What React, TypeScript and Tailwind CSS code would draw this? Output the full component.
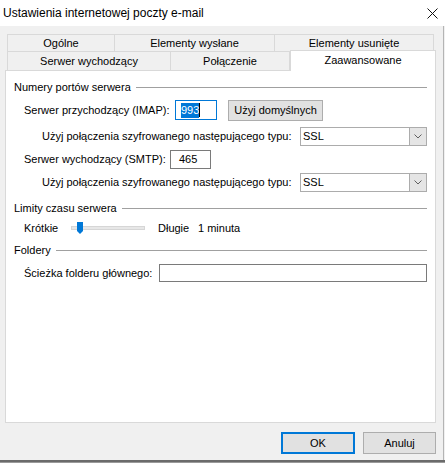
import React from 'react';

const font = { fontFamily: '"Liberation Sans", Arial, sans-serif' };

function GroupHeader({ label, className }: { label: string; className: string }) {
  return (
    <div className={`flex items-center h-[18px] pl-[8px] pr-[8px] ${className}`}>
      <span>{label}</span>
      <div className="flex-1 h-px bg-[#a0a0a0] ml-[5px]" />
    </div>
  );
}

function Combo({ value }: { value: string }) {
  return (
    <div className="ml-auto mr-[8px] w-[127px] h-[19px] shrink-0 border border-[#acacac] bg-white flex items-center">
      <span className="pl-[2px] flex-1">{value}</span>
      <div className="w-[17px] h-[17px] bg-[#e5e5e5] border-l border-[#acacac] flex items-center justify-center">
        <svg width="8" height="5" viewBox="0 0 8 5">
          <path d="M0.5 0.5 L4 4 L7.5 0.5" fill="none" stroke="#606060" strokeWidth="1" />
        </svg>
      </div>
    </div>
  );
}

export default function App() {
  return (
    <div
      className="w-[445px] h-[463px] bg-[#f0f0f0] flex flex-col text-[11px] text-black leading-none overflow-hidden whitespace-nowrap"
      style={font}
    >
      {/* Title bar */}
      <div className="h-[26px] bg-white flex items-center justify-between pl-[3px] pr-[7px] shrink-0">
        <span className="text-[12px]">Ustawienia internetowej poczty e-mail</span>
        <svg width="11" height="11" viewBox="0 0 11 11">
          <path d="M0.5 0.5 L10.5 10.5 M10.5 0.5 L0.5 10.5" stroke="#111" strokeWidth="1" />
        </svg>
      </div>

      <div className="flex-1 flex flex-col border-r border-[#b4b4b4] w-[444px]">
        {/* Tabs */}
        <div className="pl-[5px] pt-[8px]">
          <div className="flex ml-[2px] h-[18px]">
            <div className="w-[108px] border border-[#d9d9d9] flex items-center justify-center">Ogólne</div>
            <div className="w-[160px] border border-l-0 border-[#d9d9d9] flex items-center justify-center">Elementy wysłane</div>
            <div className="w-[159px] border border-l-0 border-[#d9d9d9] flex items-center justify-center">Elementy usunięte</div>
          </div>
          <div className="flex ml-[2px] h-[18px] items-end relative z-10">
            <div className="w-[164px] h-[18px] border border-t-0 border-b-0 border-[#d9d9d9] flex items-center justify-center">Serwer wychodzący</div>
            <div className="w-[119px] h-[18px] border-r border-[#d9d9d9] flex items-center justify-center">Połączenie</div>
            <div className="w-[146px] h-[21px] -mb-px -mt-[3px] bg-white border border-b-0 border-[#d9d9d9] flex items-center justify-center pb-[2px]">
              Zaawansowane
            </div>
          </div>

          {/* Panel */}
          <div className="w-[431px] h-[353px] bg-white border border-[#d9d9d9] flex flex-col">
            <GroupHeader label="Numery portów serwera" className="mt-[7px]" />

            <div className="flex items-start h-[21px] mt-[4px] pl-[18px]">
              <span className="w-[151px] h-[20px] shrink-0 flex items-center">Serwer przychodzący (IMAP):</span>
              <div className="w-[42px] h-[20px] shrink-0 overflow-hidden border border-[#0078d7] flex items-center pl-[5px]">
                <span className="bg-[#0078d7] text-white h-[15px] flex items-center">993</span>
                <span className="w-px h-[14px] bg-black" />
              </div>
              <div className="ml-[11px] w-[95px] h-[21px] shrink-0 bg-[#e1e1e1] border border-[#adadad] flex items-center justify-center">
                Użyj domyślnych
              </div>
            </div>

            <div className="flex items-center h-[19px] mt-[6px] pl-[36px]">
              <span>Użyj połączenia szyfrowanego następującego typu:</span>
              <Combo value="SSL" />
            </div>

            <div className="flex items-center h-[19px] mt-[4px] pl-[18px]">
              <span className="w-[146px] shrink-0">Serwer wychodzący (SMTP):</span>
              <div className="w-[41px] h-[19px] shrink-0 border border-[#7a7a7a] flex items-center pl-[8px]">465</div>
            </div>

            <div className="flex items-center h-[19px] mt-[4px] pl-[36px]">
              <span>Użyj połączenia szyfrowanego następującego typu:</span>
              <Combo value="SSL" />
            </div>

            <GroupHeader label="Limity czasu serwera" className="mt-[7px]" />

            <div className="flex items-center h-[16px] mt-[3px] pl-[18px]">
              <span className="w-[47px] shrink-0">Krótkie</span>
              <div className="relative w-[74px] h-[4px] shrink-0 bg-[#e7e7e7] border border-[#d6d6d6]">
                <svg className="absolute left-[5px] -top-[5px]" width="6" height="12" viewBox="0 0 6 12">
                  <path d="M0 0 H6 V9 L3 12 L0 9 Z" fill="#0078d7" />
                </svg>
              </div>
              <span className="ml-[13px] w-[40px] shrink-0">Długie</span>
              <span>1 minuta</span>
            </div>

            <GroupHeader label="Foldery" className="mt-[5px]" />

            <div className="flex items-center h-[18px] mt-[5px] pl-[18px]">
              <span className="w-[135px] shrink-0">Ścieżka folderu głównego:</span>
              <div className="ml-auto mr-[8px] w-[268px] h-[18px] shrink-0 border border-[#7a7a7a]" />
            </div>
          </div>
        </div>

        {/* Buttons */}
        <div className="flex justify-end gap-[8px] mt-[9px] pr-[7px]">
          <div className="w-[74px] h-[22px] bg-[#e1e1e1] border-2 border-[#0078d7] flex items-center justify-center">OK</div>
          <div className="w-[73px] h-[22px] bg-[#e1e1e1] border border-[#adadad] flex items-center justify-center">Anuluj</div>
        </div>
      </div>
      <div className="h-[2px] bg-[#6b6b6b] shrink-0" />
      <div className="h-[1px] bg-[#9a9a9a] shrink-0" />
    </div>
  );
}
